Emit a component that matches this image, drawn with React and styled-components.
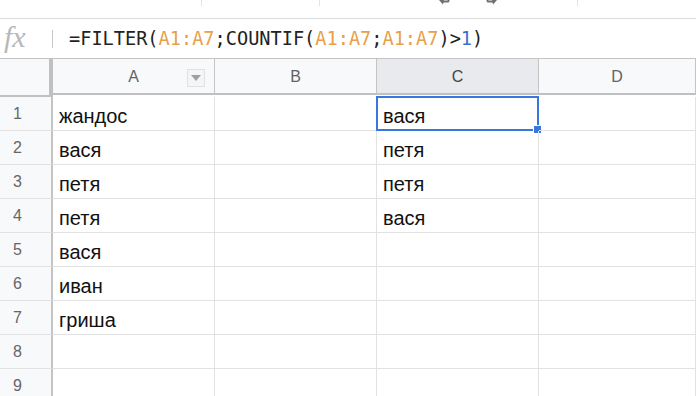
import React from 'react'
import styled, { createGlobalStyle } from 'styled-components'

const GlobalStyle = createGlobalStyle`
  html, body { margin: 0; padding: 0; background: #fff; }
  body { width: 696px; height: 396px; overflow: hidden; font-family: "Liberation Sans", Arial, sans-serif; }
`

const columns = ['A', 'B', 'C', 'D']
const rows = [
  ['жандос', '', 'вася', ''],
  ['вася', '', 'петя', ''],
  ['петя', '', 'петя', ''],
  ['петя', '', 'вася', ''],
  ['вася', '', '', ''],
  ['иван', '', '', ''],
  ['гриша', '', '', ''],
  ['', '', '', ''],
  ['', '', '', ''],
]

const Toolbar = styled.div`
  height: 18px;
  border-bottom: 1px solid #dcdcdc;
  display: flex;
  align-items: flex-start;
  overflow: hidden;
`

const ToolGap = styled.div`
  width: ${p => p.w}px;
  flex-shrink: 0;
`

const ToolDivider = styled.div`
  width: 1px;
  height: 6px;
  background: #e4e4e4;
  flex-shrink: 0;
`

const ToolIcon = styled.svg`
  width: 16px;
  height: 6px;
  flex-shrink: 0;
`

const FormulaBar = styled.div`
  height: 39px;
  display: flex;
  align-items: center;
`

const FxBox = styled.div`
  width: 52px;
  display: flex;
  justify-content: flex-start;
  padding-left: 4px;
  font-family: "Liberation Serif", "DejaVu Serif", serif;
  font-style: italic;
  font-size: 30px;
  color: #b8b8b8;
  box-sizing: border-box;
  margin-top: -4px;
`

const FxDivider = styled.div`
  width: 1px;
  height: 18px;
  background: #c8c8c8;
`

const Formula = styled.div`
  margin-left: 16px;
  font-family: "DejaVu Sans Mono", "Liberation Mono", monospace;
  font-size: 18.6px;
  color: #222;
  white-space: pre;
  margin-top: -1px;
`

const Ref = styled.span`
  color: ${p => (p.num ? '#3d6fc9' : '#e8a04a')};
`

const Sheet = styled.div`
  display: grid;
  grid-template-columns: 53px 162px 162px 162px 1fr;
  border-top: 1px solid #c4c4c4;
`

const Corner = styled.div`
  height: 36px;
  background: #f8f9fa;
  border-right: 4px solid #c0c0c0;
  border-bottom: 2px solid #c0c0c0;
`

const ColHeader = styled.div`
  height: 36px;
  position: relative;
  display: flex;
  align-items: center;
  justify-content: center;
  padding-top: 2px;
  box-sizing: border-box;
  height: 36px;
  background: ${p => (p.active ? '#e8eaed' : '#f8f9fa')};
  color: ${p => (p.active ? '#444' : '#5f6368')};
  border-right: 1px solid #c4c4c4;
  border-bottom: 2px solid #c0c0c0;
  font-size: 16px;
`

const FilterButton = styled.div`
  position: absolute;
  right: 9px;
  top: 10px;
  width: 16px;
  height: 16px;
  border: 1px solid #e0e0e0;
  background: #f4f5f6;
  display: flex;
  align-items: center;
  justify-content: center;
  &::after {
    content: '';
    border-left: 5px solid transparent;
    border-right: 5px solid transparent;
    border-top: 6px solid #a0a0a0;
  }
`

const RowHeader = styled.div`
  height: 33px;
  background: #f8f9fa;
  color: #666;
  font-size: 16px;
  display: flex;
  align-items: center;
  justify-content: center;
  padding: 1px 16px 0 0;
  box-sizing: border-box;
  height: 34px;
  border-right: 2px solid #c4c4c4;
  border-bottom: 1px solid #e2e2e2;
`

const Cell = styled.div`
  position: relative;
  display: flex;
  align-items: center;
  padding: 5px 0 0 6px;
  box-sizing: border-box;
  border-right: 1px solid #e2e2e2;
  border-bottom: 1px solid #e2e2e2;
  height: 34px;
  font-size: 20px;
  color: #111;
  white-space: nowrap;
`

const Selection = styled.div`
  position: absolute;
  left: -1px;
  top: -1px;
  right: -1px;
  bottom: -1px;
  border: 2px solid #3a76e0;
  pointer-events: none;
  &::after {
    content: '';
    position: absolute;
    right: -5px;
    bottom: -5px;
    width: 7px;
    height: 7px;
    background: #3a76e0;
    border: 1px solid #fff;
  }
`

const Arrow = ({ flip }) => (
  <ToolIcon viewBox="0 0 16 6" style={flip ? { transform: 'scaleX(-1)' } : undefined}>
    <path d="M4 1.5 L11 1.5 L12 0" fill="none" stroke="#707070" strokeWidth="2" />
    <path d="M2 0 L6 4.5 L7 0 Z" fill="#707070" />
  </ToolIcon>
)

export default function App() {
  return (
    <>
      <GlobalStyle />
      <Toolbar>
        <ToolGap w={201} />
        <ToolDivider />
        <ToolGap w={117} />
        <ToolDivider />
        <ToolGap w={117} />
        <Arrow />
        <ToolGap w={30} />
        <Arrow flip />
        <ToolGap w={78} />
        <ToolDivider />
      </Toolbar>
      <FormulaBar>
        <FxBox>fx</FxBox>
        <FxDivider />
        <Formula>
          =FILTER(<Ref>A1:A7</Ref>;COUNTIF(<Ref>A1:A7</Ref>;<Ref>A1:A7</Ref>)&gt;<Ref num>1</Ref>)
        </Formula>
      </FormulaBar>
      <Sheet>
        <Corner />
        {columns.map(c => (
          <ColHeader key={c} active={c === 'C'}>
            {c}
            {c === 'A' && <FilterButton />}
          </ColHeader>
        ))}
        {rows.map((row, i) => (
          <React.Fragment key={i}>
            <RowHeader>{i + 1}</RowHeader>
            {row.map((v, j) => (
              <Cell key={j}>
                {v}
                {i === 0 && j === 2 && <Selection />}
              </Cell>
            ))}
          </React.Fragment>
        ))}
      </Sheet>
    </>
  )
}
